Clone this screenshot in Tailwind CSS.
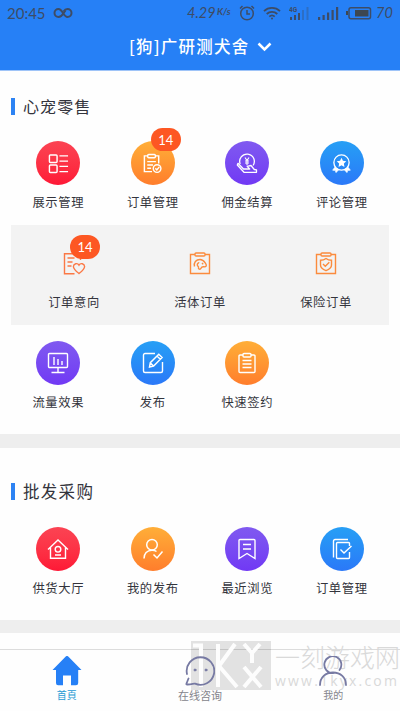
<!DOCTYPE html>
<html lang="zh-CN">
<head>
<meta charset="utf-8">
<meta name="viewport" content="width=device-width, initial-scale=1">
<title>广研测犬舍</title>
<script src="https://cdn.jsdelivr.net/npm/@tailwindcss/browser@4"></script>
</head>
<body class="bg-white">
<div class="relative flex h-[711px] w-[400px] flex-col overflow-hidden bg-[#fefefe] font-['Noto_Sans_CJK_SC',sans-serif] text-[#33343c]">

  <header class="flex h-[71px] shrink-0 flex-col border-b border-[#9fc4f8] bg-[#2680f6]">
    <div class="flex h-[26px] items-center pl-[7px] pr-[7px] font-[Lato,sans-serif] text-[14px] leading-none text-[#3d4c66]">
      <span class="w-[39px] text-[15px]">20:45</span>
      <svg class="ml-[7px] h-[12px] w-[20px]" viewBox="0 0 20 12" fill="none" stroke="currentColor" stroke-width="2"><path d="M12.5 3.5C10 6 9.500 10 5.500 10a4 4 0 0 1 0-8C9.500 2 10.500 10 14.500 10a4 4 0 0 0 0-8c-2 0-3 1-4 2.500"/></svg>
      <span class="ml-auto w-[30px] text-[14.500px] italic">4.29</span>
      <span class="mt-[-2px] w-[15px] text-[9.500px] font-bold italic">K/s</span>
      <svg class="ml-[7px] h-[16px] w-[16px]" viewBox="0 0 16 16" fill="none" stroke="currentColor" stroke-width="1.500"><circle cx="8" cy="8.500" r="6.300"/><path d="M8 5v4h3M1 3.500 3.500 1M15 3.500 12.500 1"/></svg>
      <svg class="ml-[8px] h-[14px] w-[18px]" viewBox="0 0 18 14" fill="none" stroke="currentColor" stroke-width="1.800"><path d="M1 5.200a11.500 11.500 0 0 1 16 0M3.700 8a7.600 7.600 0 0 1 10.600 0M6.300 10.600a4 4 0 0 1 5.400 0"/><circle cx="9" cy="12.600" r="1" fill="currentColor" stroke="none"/></svg>
      <svg class="ml-[8px] h-[14px] w-[21px]" viewBox="0 0 21 14" fill="currentColor"><text x="0" y="5.500" font-size="6.500" font-weight="bold" font-family="Roboto">4G</text><path d="M1 11h2v3H1zM5 9h2v5H5zM9 7h2v7H9z"/><path opacity=".35" d="M13 4h2v10h-2zM17.500 1h2v13h-2z"/></svg>
      <svg class="ml-[8px] h-[14px] w-[21px]" viewBox="0 0 21 14" fill="currentColor"><path d="M0 11h2.200v3H0zM4.500 9h2.200v5H4.500zM9 6.500h2.200V14H9zM13.500 4h2.200v10h-2.200zM18 1h2.200v13H18z"/></svg>
      <svg class="ml-[7px] h-[14px] w-[26px]" viewBox="0 0 26 14"><rect x="3" y="1.700" width="21.500" height="11" rx="2" fill="none" stroke="#3d4c66" stroke-width="1.500"/><path d="M9 4h13.500v6.500H9zM0 5h2v4H0z" fill="#3d4750"/></svg>
      <span class="ml-[4px] w-[17px] text-[14.500px] italic">70</span>
    </div>
    <div class="flex h-[42px] items-center pl-[129px] text-white">
      <span class="w-[121px] whitespace-nowrap text-[16.500px] font-medium leading-none tracking-[1.200px] -mt-[2px]">[狗]广研测犬舍</span>
      <svg class="ml-[7px] h-[10px] w-[15px]" viewBox="0 0 15 10" fill="none" stroke="currentColor" stroke-width="2.500"><path d="m1.500 1.500 6 6 6-6"/></svg>
    </div>
  </header>

  <section class="h-[363px] shrink-0 px-[11px]">
    <h2 class="mt-[26px] flex h-[18px] items-center text-[16px] leading-none tracking-[1.100px]"><span class="mr-[8px] h-[17px] w-[4px] bg-[#2d83f3]"></span>心宠零售</h2>
    <div class="mt-[26px] grid h-[84px] grid-cols-4 text-[12.300px] leading-[18px] tracking-[0.600px]">
      <div class="flex flex-col items-center">
        <div class="flex size-[44px] items-center justify-center rounded-full bg-linear-to-b from-[#fb4353] to-[#fe1736]">
          <svg class="size-[21px]" viewBox="0 0 22 22" fill="none" stroke="#fff" stroke-width="1.500"><rect x="1.500" y="2" width="8" height="8" rx="1"/><rect x="1.500" y="12.500" width="8" height="8" rx="1"/><path d="M12 3h9M12 8.500h9M12 14h9M12 19.500h9"/></svg>
        </div>
        <span class="mt-[8px]">展示管理</span>
      </div>
      <div class="flex flex-col items-center">
        <div class="relative flex size-[44px] items-center justify-center rounded-full bg-linear-to-b from-[#ffae38] to-[#ff7d2c]">
          <svg class="size-[21px]" viewBox="0 0 22 22" fill="none" stroke="#fff" stroke-width="1.500"><path d="M6 3H2.500v16.500h8M14 3h3.500v8M5.500 9h9M5.500 12.500h6M5.500 16h4"/><rect x="6" y="1.500" width="8" height="3.500" rx="1"/><circle cx="15.800" cy="16.300" r="4"/><path d="m14 16 1.500 1.700 2.600-3"/></svg>
          <span class="absolute left-[20px] top-[-13px] flex h-[23px] w-[30px] items-center justify-center rounded-full bg-[#fd5723] font-[Lato,sans-serif] text-[13px] tracking-normal text-white">14</span>
        </div>
        <span class="mt-[8px]">订单管理</span>
      </div>
      <div class="flex flex-col items-center">
        <div class="flex size-[44px] items-center justify-center rounded-full bg-linear-to-b from-[#8059f0] to-[#7138f4]">
          <svg class="size-[22px]" viewBox="0 0 22 22" fill="none" stroke="#fff" stroke-width="1.300" stroke-linejoin="round"><path d="M4.200 12A7.300 7.300 0 1 1 17 13.500"/><path stroke-width="1.100" d="M9 5.500 11 8.500l2-3M11 8.500v4.800M9 9h4M9 11h4"/><path d="M2 11.300 7.500 17h6.200l-2.500-2.600 3.800-.9 3.300 4 2.200.3v2.500H8L1.300 13z"/></svg>
        </div>
        <span class="mt-[8px]">佣金结算</span>
      </div>
      <div class="flex flex-col items-center">
        <div class="flex size-[44px] items-center justify-center rounded-full bg-linear-to-b from-[#279ff5] to-[#2b78f8]">
          <svg class="size-[21px]" viewBox="0 0 22 22" fill="none" stroke="#fff" stroke-width="1.400"><circle cx="11" cy="10" r="8"/><path fill="#fff" stroke="none" d="m11 5 1.500 3.200 3.500.5-2.500 2.400.6 3.500-3.100-1.700-3.100 1.700.6-3.500L6 8.700l3.500-.5z"/><path fill="#fff" stroke-width=".8" d="M4 15l-2.200 3 2.700.2.800 2.300L8 17.500zM18 15l2.200 3-2.700.2-.8 2.300-2.700-3z"/></svg>
        </div>
        <span class="mt-[8px]">评论管理</span>
      </div>
    </div>
    <div class="grid h-[100px] grid-cols-3 bg-[#f3f3f3] pt-[27px] text-[12.300px] leading-[18px] tracking-[0.600px]">
      <div class="flex flex-col items-center">
        <div class="relative size-[24px]">
          <svg class="size-[24px]" viewBox="0 0 24 24" fill="none" stroke="#fb7845" stroke-width="1.400"><path d="M18.500 8V1.700h-16v20h10M5.500 6h7M5.500 10h5M5.500 14h4"/><path d="M17 21.500c-3-2.300-5.600-4.200-5.600-7a3 3 0 0 1 5.600-1.300 3 3 0 0 1 5.600 1.300c0 2.800-2.600 4.700-5.600 7z"/></svg>
          <span class="absolute left-[8px] top-[-17px] flex h-[24px] w-[30px] items-center justify-center rounded-full bg-[#fd5723] font-[Lato,sans-serif] text-[13px] tracking-normal text-white">14</span>
        </div>
        <span class="mt-[17px]">订单意向</span>
      </div>
      <div class="flex flex-col items-center">
        <svg class="size-[24px]" viewBox="0 0 24 24" fill="none" stroke="#fb8b3d" stroke-width="1.400"><path d="M7 2.500H2.500v19h19v-19H17"/><rect x="7" y="1" width="10" height="3" rx="1"/><path d="M6.500 14.500c-1-4 1.500-7 5.500-7 3.500 0 4.500 2.500 5.800 4.300 1.200 1.700.2 3.400-1.800 3-2-.4-2.500.2-3 1.500-.6 1.500-3 1-2.500-.5.400-1.500-1.200-1.500-1.200-3s1.200-1.500 1.700-2.500m3 .7 1.200 1.200"/></svg>
        <span class="mt-[17px]">活体订单</span>
      </div>
      <div class="flex flex-col items-center">
        <svg class="size-[24px]" viewBox="0 0 24 24" fill="none" stroke="#fb8b3d" stroke-width="1.400"><path d="M7 2.500H2.500v19h19v-19H17"/><rect x="7" y="1" width="10" height="3" rx="1"/><path d="M12 6.500c2 1.500 3.500 1.700 5.500 1.700V13c0 3-2.500 4.500-5.500 5.700C9 17.500 6.500 16 6.500 13V8.200c2 0 3.500-.2 5.500-1.700z"/><path d="m9 12 2.300 2.300 4-4"/></svg>
        <span class="mt-[17px]">保险订单</span>
      </div>
    </div>
    <div class="mt-[16px] grid h-[84px] grid-cols-4 text-[12.300px] leading-[18px] tracking-[0.600px]">
      <div class="flex flex-col items-center">
        <div class="flex size-[44px] items-center justify-center rounded-full bg-linear-to-b from-[#8059f0] to-[#7138f4]">
          <svg class="size-[22px]" viewBox="0 0 22 22" fill="none" stroke="#fff" stroke-width="1.400"><rect x="1.500" y="1.500" width="19" height="14" rx="1"/><path d="M7 5v8M11 7v6M15 9v4M11 15.500V20M4.500 20.500h13"/></svg>
        </div>
        <span class="mt-[8px]">流量效果</span>
      </div>
      <div class="flex flex-col items-center">
        <div class="flex size-[44px] items-center justify-center rounded-full bg-linear-to-b from-[#279ff5] to-[#2b78f8]">
          <svg class="size-[22px]" viewBox="0 0 22 22" fill="none" stroke="#fff" stroke-width="1.400"><path d="M13 1.500H3a1.500 1.500 0 0 0-1.500 1.500v16A1.500 1.500 0 0 0 3 20.500h16a1.500 1.500 0 0 0 1.500-1.500V10"/><path d="m7.500 15 .8-4.300 8.500-8.500 3.300 3.300-8.500 8.500zM15 4l3.300 3.300M8.500 11l3 3"/></svg>
        </div>
        <span class="mt-[8px]">发布</span>
      </div>
      <div class="flex flex-col items-center">
        <div class="flex size-[44px] items-center justify-center rounded-full bg-linear-to-b from-[#ffae38] to-[#ff7d2c]">
          <svg class="size-[22px]" viewBox="0 0 22 22" fill="none" stroke="#fff" stroke-width="1.400"><path d="M7 3H4a1 1 0 0 0-1 1v15.500a1 1 0 0 0 1 1h14a1 1 0 0 0 1-1V4a1 1 0 0 0-1-1h-3M6.500 8.500h9M6.500 12h9M6.500 15.500h9"/><rect x="7" y="1.500" width="8" height="3.500" rx="1"/></svg>
        </div>
        <span class="mt-[8px]">快速签约</span>
      </div>
    </div>
  </section>

  <div class="h-[14px] shrink-0 bg-[#eeeeee]"></div>

  <section class="h-[172px] shrink-0 px-[11px]">
    <h2 class="mt-[34px] flex h-[18px] items-center text-[16.500px] leading-none tracking-[1.300px]"><span class="mr-[8px] h-[17px] w-[4px] bg-[#2d83f3]"></span>批发采购</h2>
    <div class="mt-[26.500px] grid grid-cols-4 text-[12.300px] leading-[18px] tracking-[0.600px]">
      <div class="flex flex-col items-center">
        <div class="flex size-[44px] items-center justify-center rounded-full bg-linear-to-b from-[#fb4353] to-[#fe1736]">
          <svg class="size-[22px]" viewBox="0 0 22 22" fill="none" stroke="#fff" stroke-width="1.400"><path d="M1 11.500 11 2l10 9.500M3.500 9.500v10.800h15V9.500M8 17h6"/><circle cx="11" cy="11.300" r="2.800"/></svg>
        </div>
        <span class="mt-[8px]">供货大厅</span>
      </div>
      <div class="flex flex-col items-center">
        <div class="flex size-[44px] items-center justify-center rounded-full bg-linear-to-b from-[#ffae38] to-[#ff7d2c]">
          <svg class="size-[22px]" viewBox="0 0 22 22" fill="none" stroke="#fff" stroke-width="1.500"><circle cx="10" cy="6.800" r="5.300"/><path d="M2 20.500c0-5 3-8.300 8-8.300 2 0 3.500.5 4.500 1.300M11.500 16.500l3.500 3.500 5.500-6.500"/></svg>
        </div>
        <span class="mt-[8px]">我的发布</span>
      </div>
      <div class="flex flex-col items-center">
        <div class="flex size-[44px] items-center justify-center rounded-full bg-linear-to-b from-[#8059f0] to-[#7138f4]">
          <svg class="size-[22px]" viewBox="0 0 22 22" fill="none" stroke="#fff" stroke-width="1.400"><path d="M4 1.500h14a1 1 0 0 1 1 1v18l-8-5-8 5v-18a1 1 0 0 1 1-1zM7 6.500h8M7 11h8"/></svg>
        </div>
        <span class="mt-[8px]">最近浏览</span>
      </div>
      <div class="flex flex-col items-center">
        <div class="flex size-[44px] items-center justify-center rounded-full bg-linear-to-b from-[#279ff5] to-[#2b78f8]">
          <svg class="size-[22px]" viewBox="0 0 22 22" fill="none" stroke="#fff" stroke-width="1.400"><path d="M2.500 19.500V3a1.500 1.500 0 0 1 1.500-1.500h13"/><path d="M18.500 8V5.500a1 1 0 0 0-1-1H6.500a1 1 0 0 0-1 1v14a1 1 0 0 0 1 1h11a1 1 0 0 0 1-1V14M9.500 11.500l3.500 3.500 7.500-7"/></svg>
        </div>
        <span class="mt-[8px]">订单管理</span>
      </div>
    </div>
  </section>

  <div class="h-[13px] shrink-0 bg-[#eeeeee]"></div>

  <nav class="mt-[16px] grid h-[62px] shrink-0 grid-cols-3 border-t border-[#dcdcdc] text-[11px] leading-[16px] text-[#85858c]">
    <div class="z-10 flex flex-col items-center pt-[6px] text-[#279bd4]">
      <svg class="h-[30px] w-[30px]" viewBox="0 0 30 30"><path fill="#2680f6" d="M13.500.8a2 2 0 0 1 3 0L29.500 14h-3.300v13a2.300 2.300 0 0 1-2.300 2.300H19V19.500h-8v9.800H6.500A2.300 2.300 0 0 1 4 27V14H.5z"/></svg>
      <span class="mt-[1px] text-[10px]">首頁</span>
    </div>
    <div class="z-10 flex flex-col items-center pt-[6px]">
      <svg class="h-[30px] w-[30px]" viewBox="0 0 30 30" fill="none" stroke="#777aa3" stroke-width="1.800" stroke-linecap="round"><path d="M2 18a13.800 13.800 0 1 1 8 9.700c-1.200-.5-2 .3-7.500.8-1.800.2-1-1-.4-2.500l1.400-3.500"/><circle cx="10" cy="14" r="1" fill="#777aa3" stroke-width="1"/><circle cx="21" cy="14" r="1" fill="#777aa3" stroke-width="1"/></svg>
      <span class="mt-[1px]">在线咨询</span>
    </div>
    <div class="z-10 flex flex-col items-center pt-[6px]">
      <svg class="h-[30px] w-[30px]" viewBox="0 0 30 30" fill="none" stroke="#777aa3" stroke-width="1.800" stroke-linecap="round"><path d="M21.500 14a8.500 8.500 0 1 0-6.500 3.200M2 29c0-7.500 5.500-12.500 13-12.500S28 21.500 28 29"/></svg>
      <span class="mt-[1px] text-[10px]">我的</span>
    </div>
  </nav>

  <div class="pointer-events-none absolute left-[191px] top-[641px] flex h-[49px] w-[209px] text-[#d9d9d9]">
    <svg class="h-[49px] w-[80px] shrink-0" viewBox="0 0 80 49"><path fill="#000" fill-opacity=".11" d="M0 0h80v49H0z"/><path fill="none" stroke="#fdfdfd" stroke-width="4" d="M2 4.500h8V46M27 3v43M44 3 28 25l18 21M53 3l8 9 8-9M61 12v10M53 26l17 20M70 26 53 46"/></svg>
    <div class="flex w-[126px] flex-col pl-[4px]">
      <span class="whitespace-nowrap text-[25px] font-light leading-[31px]">一刻游戏网</span>
      <span class="mt-[1px] whitespace-nowrap font-['Open_Sans',sans-serif] text-[14px] leading-[15px] tracking-[2.200px]">www.1kyx.com</span>
    </div>
  </div>
</div>
</body>
</html>
